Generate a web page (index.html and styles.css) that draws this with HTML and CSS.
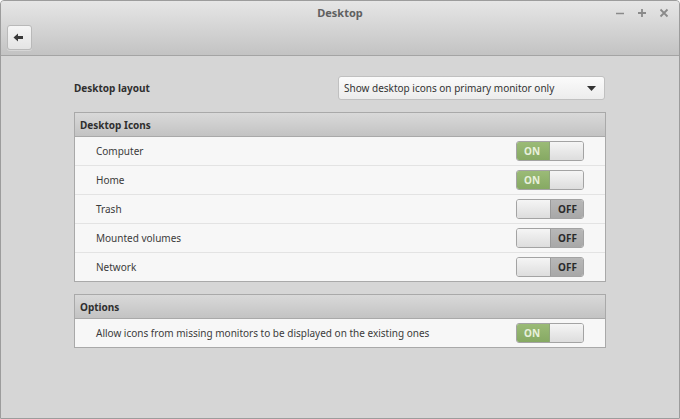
FILE: index.html
```html
<!DOCTYPE html>
<html>
<head>
<meta charset="utf-8">
<link rel="stylesheet" href="styles.css">
</head>
<body>
<div class="window">
  <div class="header">
    <div class="titlebar">
      <span class="title">Desktop</span>
      <div class="controls">
        <svg class="ctl" width="10" height="10" viewBox="0 0 10 10"><path d="M1 5.5H9" stroke="#8a8a8a" stroke-width="1.6"/></svg>
        <svg class="ctl" width="10" height="10" viewBox="0 0 10 10"><path d="M1 5H9M5 1V9" stroke="#8a8a8a" stroke-width="1.8"/></svg>
        <svg class="ctl" width="10" height="10" viewBox="0 0 10 10"><path d="M1.5 1.5L8.5 8.5M8.5 1.5L1.5 8.5" stroke="#8a8a8a" stroke-width="1.8"/></svg>
      </div>
    </div>
    <div class="toolbar">
      <div class="backbtn">
        <svg width="11" height="9" viewBox="0 0 11 9"><path d="M0.5 4.5L5 0.5V3H10V6H5V8.5Z" fill="#3a3a3a"/></svg>
      </div>
    </div>
  </div>
  <div class="content">
    <div class="layout-row">
      <span class="label-bold">Desktop layout</span>
      <div class="combo">
        <span>Show desktop icons on primary monitor only</span>
        <svg width="9" height="5" viewBox="0 0 9 5"><path d="M0 0H9L4.5 5Z" fill="#333"/></svg>
      </div>
    </div>
    <div class="frame">
      <div class="frame-head">Desktop Icons</div>
      <div class="row"><span>Computer</span><div class="switch on"><span class="lbl">ON</span><span class="knob"></span></div></div>
      <div class="row"><span>Home</span><div class="switch on"><span class="lbl">ON</span><span class="knob"></span></div></div>
      <div class="row"><span>Trash</span><div class="switch off"><span class="knob"></span><span class="lbl">OFF</span></div></div>
      <div class="row"><span>Mounted volumes</span><div class="switch off"><span class="knob"></span><span class="lbl">OFF</span></div></div>
      <div class="row"><span>Network</span><div class="switch off"><span class="knob"></span><span class="lbl">OFF</span></div></div>
    </div>
    <div class="frame">
      <div class="frame-head">Options</div>
      <div class="row"><span>Allow icons from missing monitors to be displayed on the existing ones</span><div class="switch on"><span class="lbl">ON</span><span class="knob"></span></div></div>
    </div>
  </div>
</div>
</body>
</html>
```
FILE: styles.css
```css
html, body {
  margin: 0;
  padding: 0;
}
body {
  font-family: "Noto Sans", "DejaVu Sans", sans-serif;
  font-size: 10px;
  color: #3b3b3b;
}
.window {
  width: 680px;
  height: 419px;
  box-sizing: border-box;
  border: 1px solid #9c9c9c;
  border-radius: 4px 4px 0 0;
  background: #d6d6d6;
  display: flex;
  flex-direction: column;
  overflow: hidden;
}
.header {
  height: 55px;
  box-sizing: border-box;
  border-bottom: 1px solid #a4a4a4;
  background: linear-gradient(#e6e6e6, #c3c3c3);
  display: flex;
  flex-direction: column;
}
.titlebar {
  height: 24px;
  position: relative;
  display: flex;
  justify-content: center;
  align-items: center;
}
.title {
  font-weight: bold;
  color: #606060;
  font-size: 11px;
  margin-top: -1px;
}
.controls {
  position: absolute;
  right: 10px;
  top: 7px;
  display: flex;
  gap: 12px;
}
.ctl {
  display: block;
}
.toolbar {
  padding: 0 0 0 6px;
}
.backbtn {
  width: 23px;
  height: 23px;
  border: 1px solid #b9b9b9;
  border-radius: 3px;
  background: linear-gradient(#f6f6f6, #e4e4e4);
  display: flex;
  align-items: center;
  justify-content: center;
  box-shadow: 0 1px 0 rgba(255,255,255,0.3);
}
.backbtn svg {
  display: block;
  margin-left: -2px;
}
.content {
  padding: 20px 73px 0 73px;
  display: flex;
  flex-direction: column;
}
.layout-row {
  display: flex;
  justify-content: space-between;
  align-items: center;
  height: 24px;
  margin-bottom: 12px;
}
.label-bold {
  font-weight: bold;
  color: #2f2f2f;
}
.combo {
  width: 267px;
  height: 24px;
  box-sizing: border-box;
  border: 1px solid #c0c0c0;
  border-radius: 3px;
  background: linear-gradient(#fbfbfb, #ececec);
  display: flex;
  align-items: center;
  justify-content: space-between;
  padding: 0 8px 0 5px;
  margin-right: 1px;
  color: #333;
}
.combo span {
  margin-top: -1px;
}
.combo svg {
  display: block;
}
.frame {
  border: 1px solid #a9a9a9;
  background: #f7f7f7;
  margin-bottom: 12px;
}
.frame-head {
  height: 24px;
  box-sizing: border-box;
  border-bottom: 1px solid #a9a9a9;
  background: linear-gradient(#d9d9d9, #c3c3c3);
  font-weight: bold;
  color: #2f2f2f;
  padding-left: 5px;
  display: flex;
  align-items: center;
}
.row {
  height: 28px;
  border-bottom: 1px solid #e3e3e3;
  display: flex;
  align-items: center;
  justify-content: space-between;
  padding: 0 21px 0 21px;
  color: #3b3b3b;
}
.row > span {
  margin-top: -1px;
}
.row:last-child {
  border-bottom: none;
}
.switch {
  width: 66px;
  height: 18px;
  border: 1px solid #a3a3a3;
  border-radius: 3px;
  display: flex;
  overflow: hidden;
  font-size: 10px;
  font-weight: bold;
}
.switch .knob {
  width: 33px;
  background: linear-gradient(#f5f5f5, #dddddd);
}
.switch .lbl {
  flex: 1;
  display: flex;
  align-items: center;
}
.switch.on .lbl {
  background: linear-gradient(#9bbb77, #86a963);
  color: #e8f0dc;
  padding-left: 7px;
  border-right: 1px solid #8fa779;
}
.switch.off .lbl {
  background: linear-gradient(#b8b8b8, #a8a8a8);
  color: #2a2a2a;
  justify-content: flex-end;
  padding-right: 6px;
  border-left: 1px solid #9a9a9a;
}
```
